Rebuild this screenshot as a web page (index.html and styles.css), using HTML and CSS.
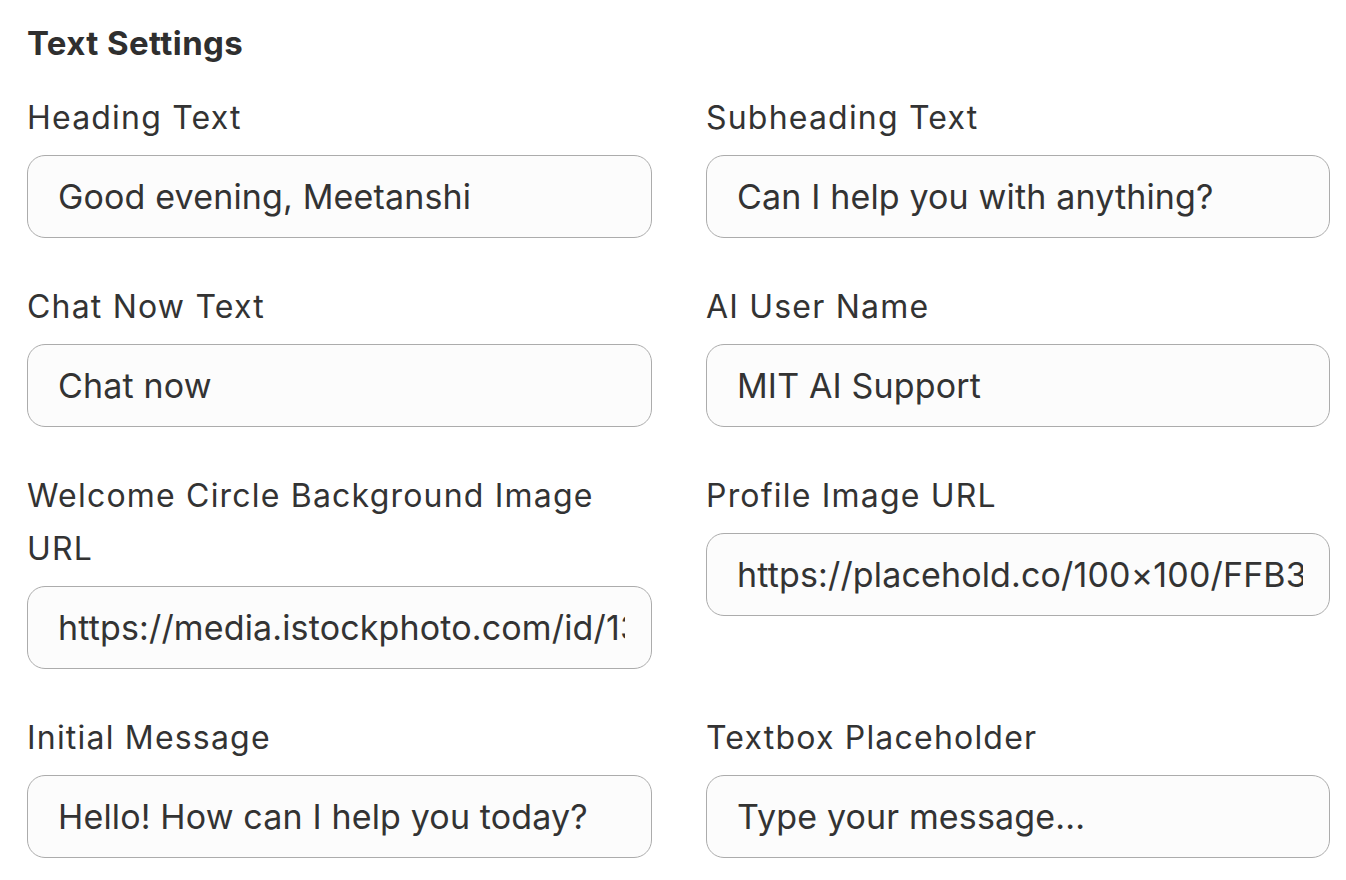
FILE: index.html
```html
<!DOCTYPE html>
<html lang="en">
<head>
<meta charset="utf-8">
<title>Text Settings</title>
<link rel="stylesheet" href="styles.css">
</head>
<body>
<section class="panel">
  <h2 class="title">Text Settings</h2>
  <div class="grid">
    <div class="field">
      <label class="label">Heading Text</label>
      <input class="input" type="text" value="Good evening, Meetanshi">
    </div>
    <div class="field">
      <label class="label">Subheading Text</label>
      <input class="input" type="text" value="Can I help you with anything?">
    </div>
    <div class="field">
      <label class="label">Chat Now Text</label>
      <input class="input" type="text" value="Chat now">
    </div>
    <div class="field">
      <label class="label">AI User Name</label>
      <input class="input" type="text" value="MIT AI Support">
    </div>
    <div class="field">
      <label class="label">Welcome Circle Background Image URL</label>
      <input class="input" type="text" value="https://media.istockphoto.com/id/1320816785/photo/abstract-background.jpg">
    </div>
    <div class="field">
      <label class="label">Profile Image URL</label>
      <input class="input" type="text" value="https://placehold.co/100×100/FFB300/FFFFFF?text=AI">
    </div>
    <div class="field">
      <label class="label">Initial Message</label>
      <input class="input" type="text" value="Hello! How can I help you today?">
    </div>
    <div class="field">
      <label class="label">Textbox Placeholder</label>
      <input class="input" type="text" value="Type your message...">
    </div>
  </div>
</section>
</body>
</html>
```
FILE: styles.css
```css
html, body {
  margin: 0;
  padding: 0;
  background: #ffffff;
}
body {
  font-family: Inter, "Noto Sans", "Liberation Sans", sans-serif;
  color: #333333;
}
.panel {
  padding: 22px 16px 0 27px;
}
.title {
  margin: 0;
  font-size: 33px;
  line-height: 42px;
  font-weight: 700;
  letter-spacing: 0.4px;
  color: #2f2f2f;
}
.grid {
  margin-top: 27px;
  display: grid;
  grid-template-columns: 625px 624px;
  column-gap: 54px;
  row-gap: 42px;
  align-items: start;
}
.field {
  display: flex;
  flex-direction: column;
}
.label {
  font-size: 32px;
  line-height: 53px;
  letter-spacing: 1.2px;
  color: #333333;
  margin-bottom: 11px;
}
.input {
  box-sizing: border-box;
  width: 100%;
  height: 83px;
  margin: 0;
  padding: 0 26px 0 30px;
  border: 1.5px solid #acacac;
  border-radius: 18px;
  background: #fcfcfc;
  font-family: inherit;
  font-size: 34px;
  letter-spacing: 0.15px;
  color: #333333;
  outline: none;
}
```
